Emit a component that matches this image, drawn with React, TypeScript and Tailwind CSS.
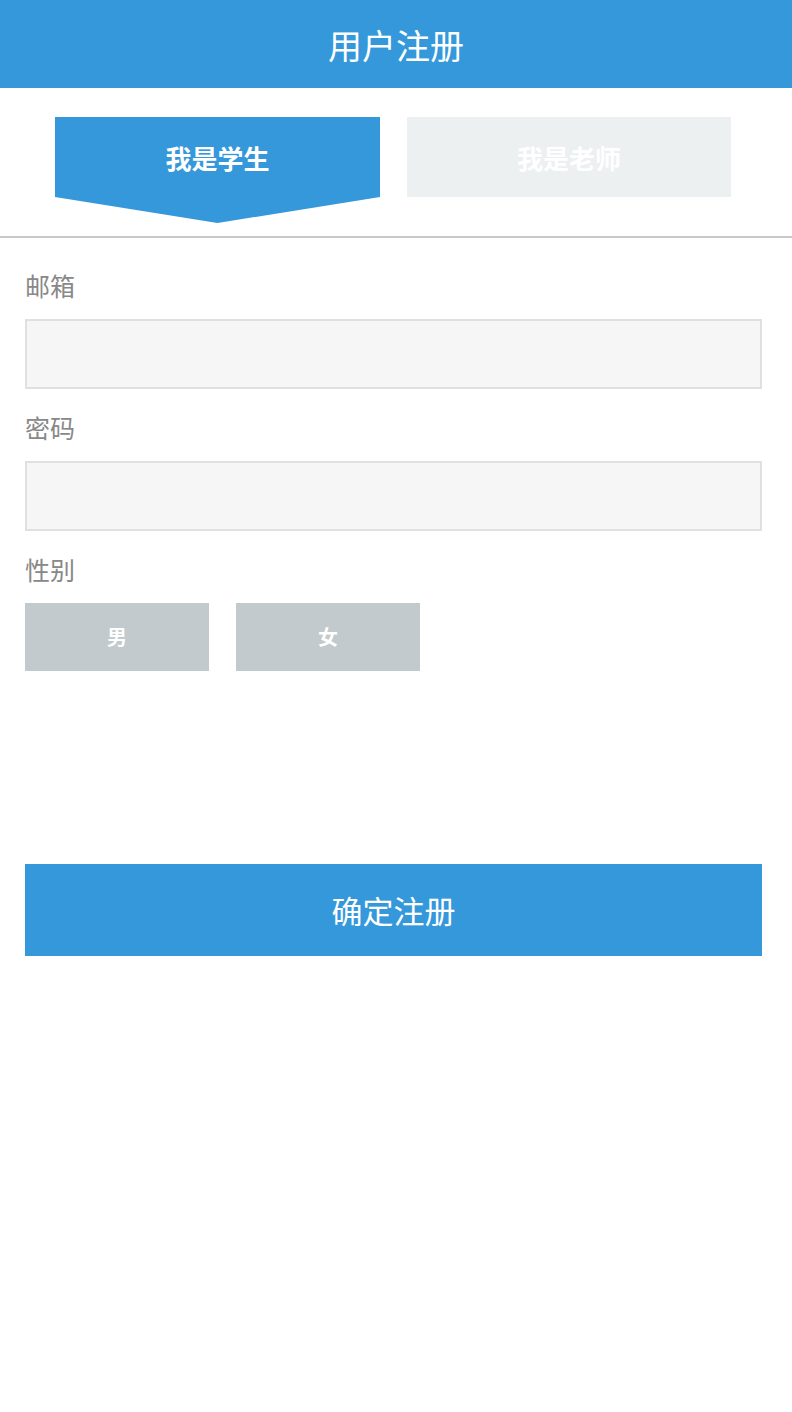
import React, { useState } from 'react'

const font = "font-['Noto_Sans_CJK_SC','Noto_Sans',sans-serif]"

const Field = ({ label, type }: { label: string; type: string }) => {
  return (
    <div className="flex flex-col">
      <label className="text-[25px] leading-[28px] text-[#888888]">{label}</label>
      <input
        type={type}
        className="mt-5 h-[70px] w-full border-2 border-[#e0e0e0] bg-[#f6f6f6] px-3 text-[22px] outline-none"
      />
    </div>
  )
}

export default function App() {
  const [role, setRole] = useState<'student' | 'teacher'>('student')

  return (
    <div className={`${font} min-h-[1412px] w-[792px] bg-white`}>
      <header className="flex h-[88px] items-center justify-center bg-[#3498db]">
        <h1 className="text-[34px] text-white">用户注册</h1>
      </header>

      {/* role tabs */}
      <div className="flex h-[150px] items-start gap-[27px] border-b-2 border-[#c8c8c8] pl-[55px] pt-[29px]">
        <button
          onClick={() => setRole('student')}
          className={`w-[325px] text-[26px] font-semibold text-white ${
            role === 'student'
              ? 'h-[106px] pb-[26px] bg-[#3498db] [clip-path:polygon(0_0,100%_0,100%_75.5%,50%_100%,0_75.5%)]'
              : 'h-[80px] bg-[#ecf0f1]'
          }`}
        >
          我是学生
        </button>
        <button
          onClick={() => setRole('teacher')}
          className={`w-[324px] text-[26px] font-semibold text-white ${
            role === 'teacher'
              ? 'h-[106px] pb-[26px] bg-[#3498db] [clip-path:polygon(0_0,100%_0,100%_75.5%,50%_100%,0_75.5%)]'
              : 'h-[80px] bg-[#ecf0f1]'
          }`}
        >
          我是老师
        </button>
      </div>

      <form className="flex flex-col pl-[25px] pr-[30px] pt-[33px]" onSubmit={(e) => e.preventDefault()}>
        <Field label="邮箱" type="email" />
        <div className="mt-6">
          <Field label="密码" type="password" />
        </div>

        <div className="mt-6 flex flex-col">
          <span className="text-[25px] leading-[28px] text-[#888888]">性别</span>
          <div className="mt-5 flex gap-[27px]">
            <button type="button" className="h-[68px] w-[184px] bg-[#c2cacd] text-[20px] font-semibold text-white">
              男
            </button>
            <button type="button" className="h-[68px] w-[184px] bg-[#c2cacd] text-[20px] font-semibold text-white">
              女
            </button>
          </div>
        </div>

        <button type="submit" className="mt-[193px] h-[92px] w-full bg-[#3498db] text-[31px] text-white">
          确定注册
        </button>
      </form>
    </div>
  )
}
